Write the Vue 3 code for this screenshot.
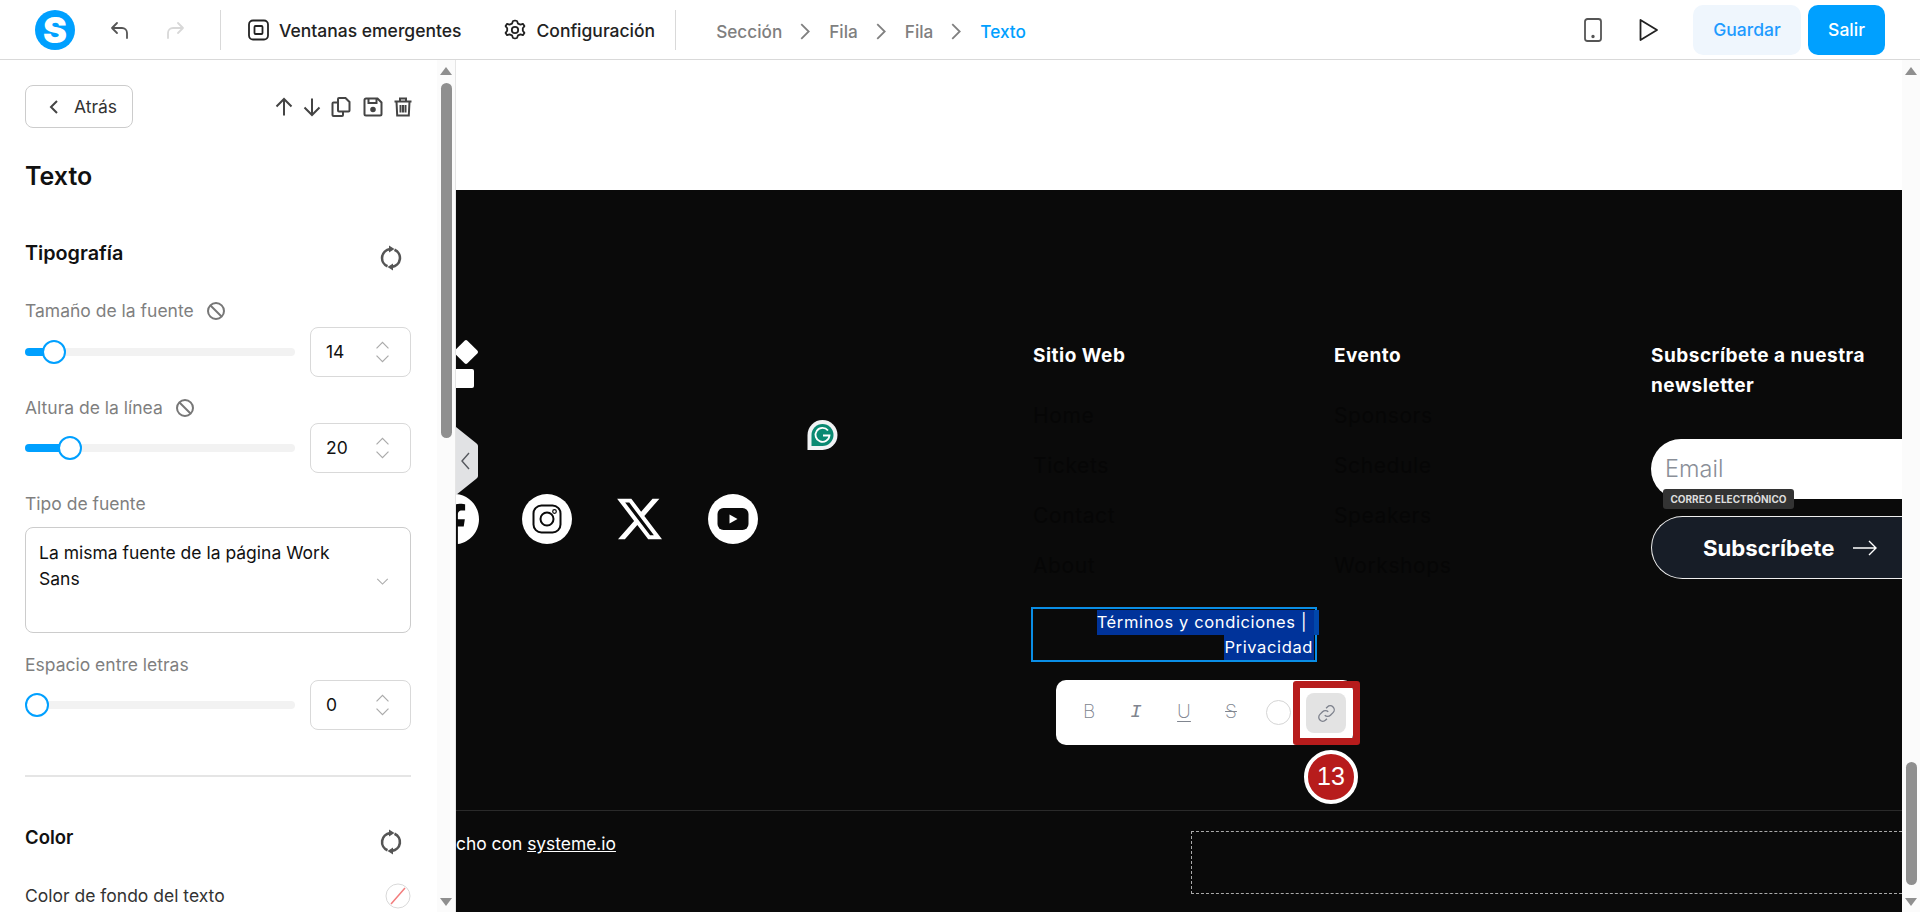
<script setup>
const crumbs = ['Sección', 'Fila', 'Fila']
const siteLinks = ['Home', 'Tickets', 'Contact', 'About']
const eventLinks = ['Sponsors', 'Schedule', 'Speakers', 'Workshops']
</script>

<template>
  <div class="app">
    <header class="top">
      <div class="logo">S</div>
      <svg class="ic undo" viewBox="0 0 24 24"><path d="M9 5 4 10l5 5M4 10h10a5 5 0 0 1 5 5v5" /></svg>
      <svg class="ic redo" viewBox="0 0 24 24"><path d="m15 5 5 5-5 5M20 10H10a5 5 0 0 0-5 5v5" /></svg>
      <i class="sep first"></i>
      <svg class="ic dark popup" viewBox="0 0 24 24"><rect x="3" y="2.500" width="19" height="19" rx="4" /><rect x="8.500" y="8" width="8" height="8" rx="1" /></svg>
      <span class="tool-text">Ventanas emergentes</span>
      <svg class="ic dark gear" viewBox="0 0 24 24"><path d="M12 2.500 14 3l1 2.600 2.500 1 2.400-.8 1.500 2.300-1.600 2.100v2.600l1.600 2.100-1.500 2.300-2.400-.8-2.500 1-1 2.600-2 .5-2-.5-1-2.600-2.500-1-2.400.8-1.500-2.300 1.600-2.100v-2.600L2.600 8.100l1.500-2.300 2.400.8 2.500-1 1-2.600z" /><circle cx="12" cy="12" r="3.200" /></svg>
      <span class="tool-text">Configuración</span>
      <i class="sep second"></i>
      <nav class="crumbs">
        <template v-for="c in crumbs" :key="c">
          <span>{{ c }}</span>
          <svg class="crumb-arrow" viewBox="0 0 12 16"><path d="m2 1 7 7-7 7" /></svg>
        </template>
        <span class="current">Texto</span>
      </nav>
      <div class="top-right">
        <svg class="ic phone" viewBox="0 0 24 24"><rect x="4" y="1" width="16" height="22" rx="2.500" /><circle cx="12" cy="18.500" r=".8" /></svg>
        <svg class="ic dark play" viewBox="0 0 24 24"><path d="M4.500 2 21 12 4.500 22z" /></svg>
        <button class="save">Guardar</button>
        <button class="exit">Salir</button>
      </div>
    </header>

    <div class="body">
      <aside class="side">
        <div class="side-inner">
          <div class="side-head">
            <button class="back">
              <svg viewBox="0 0 12 16"><path d="M9 2 3 8l6 6" /></svg>
              <span>Atrás</span>
            </button>
            <div class="head-icons">
              <svg viewBox="0 0 20 20" class="i20"><path d="M10 18.500V2M2.500 9.500 10 2l7.500 7.500" /></svg>
              <svg viewBox="0 0 20 20" class="i20 down"><path d="M10 1.500V18M2.500 10.500 10 18l7.500-7.500" /></svg>
              <svg viewBox="0 0 20 20" class="i20 copy"><path d="M6.500 5.500H2.500a1 1 0 0 0-1 1V18a1 1 0 0 0 1 1H11a1 1 0 0 0 1-1v-3M8 1h6.500l4 4V13.500a1 1 0 0 1-1 1H8a1 1 0 0 1-1-1V2a1 1 0 0 1 1-1z" /></svg>
              <svg viewBox="0 0 20 20" class="i20 disk"><path d="M3 1.500h11.500l4 4V17a1.500 1.500 0 0 1-1.500 1.500H3A1.500 1.500 0 0 1 1.500 17V3A1.500 1.500 0 0 1 3 1.500zM5.500 1.500v4.500h8V1.500" /><circle cx="10" cy="12.500" r="1.800" fill="#444" /></svg>
              <svg viewBox="0 0 20 20" class="i20 trash"><path d="M1.500 4.500h17M7 4.500V1.500h6v3M3.500 4.500l.7 14h11.600l.7-14M7.500 8v7.500M10 8v7.500M12.500 8v7.500" /></svg>
            </div>
          </div>

          <h1 class="title">Texto</h1>

          <div class="section-row typo">
            <h2>Tipografía</h2>
            <svg class="sync" viewBox="0 0 24 24"><path d="M8.500 20.300A9 9 0 0 1 11 3.100M15.500 3.700A9 9 0 0 1 13 20.900" /><path class="solid" d="m10 -.5 5.500 3.500L10 6.500zM14 24.500 8.500 21l5.500-3.500z" /></svg>
          </div>

          <div class="label lab-size">Tamaño de la fuente
            <svg class="ban" viewBox="0 0 20 20"><circle cx="10" cy="10" r="8" /><path d="m4.500 4.500 11 11" /></svg>
          </div>
          <div class="slider-row r1">
            <div class="track"><div class="fill" style="width: 29px"></div><div class="thumb" style="left: 17px"></div></div>
            <div class="num"><span>14</span><svg viewBox="0 0 16 24"><path d="m1.500 8 6.500-6.500L14.500 8M1.500 16l6.500 6.500 6.500-6.500" /></svg></div>
          </div>

          <div class="label lab-line">Altura de la línea
            <svg class="ban" viewBox="0 0 20 20"><circle cx="10" cy="10" r="8" /><path d="m4.500 4.500 11 11" /></svg>
          </div>
          <div class="slider-row r2">
            <div class="track"><div class="fill" style="width: 45px"></div><div class="thumb" style="left: 33px"></div></div>
            <div class="num"><span>20</span><svg viewBox="0 0 16 24"><path d="m1.500 8 6.500-6.500L14.500 8M1.500 16l6.500 6.500 6.500-6.500" /></svg></div>
          </div>

          <div class="label lab-type">Tipo de fuente</div>
          <div class="select">
            <div class="select-text">La misma fuente de la página Work Sans</div>
            <svg viewBox="0 0 14 8"><path d="m1 1 6 6 6-6" /></svg>
          </div>

          <div class="label lab-space">Espacio entre letras</div>
          <div class="slider-row r3">
            <div class="track"><div class="thumb" style="left: 0"></div></div>
            <div class="num"><span>0</span><svg viewBox="0 0 16 24"><path d="m1.500 8 6.500-6.500L14.500 8M1.500 16l6.500 6.500 6.500-6.500" /></svg></div>
          </div>

          <hr class="rule" />

          <div class="section-row color">
            <h2>Color</h2>
            <svg class="sync" viewBox="0 0 24 24"><path d="M8.500 20.300A9 9 0 0 1 11 3.100M15.500 3.700A9 9 0 0 1 13 20.900" /><path class="solid" d="m10 -.5 5.500 3.500L10 6.500zM14 24.500 8.500 21l5.500-3.500z" /></svg>
          </div>
          <div class="color-row">
            <span>Color de fondo del texto</span>
            <svg class="swatch" viewBox="0 0 26 26"><circle cx="13" cy="13" r="12" fill="#fff" stroke="#d9d9d9" /><path d="M6 21 20 5" stroke="#f27c7c" stroke-width="1.500" /></svg>
          </div>
        </div>
        <div class="bar">
          <i class="arrow up"></i>
          <i class="bar-thumb side-thumb"></i>
          <i class="arrow dn"></i>
        </div>
      </aside>

      <main class="canvas">
        <div class="page">
          <div class="blank"></div>
          <footer class="foot">
            <div class="foot-grid">
              <div class="brand">
                <div class="mark">
                  <i class="diamond"></i>
                  <i class="square"></i>
                </div>
                <div class="socials">
                  <svg class="fb" viewBox="0 0 24 24"><path fill="#fff" d="M24 12.070C24 5.400 18.630 0 12 0S0 5.400 0 12.070c0 6.030 4.390 11.020 10.130 11.930v-8.440H7.080v-3.490h3.050V9.410c0-3.020 1.790-4.690 4.530-4.690 1.310 0 2.680.24 2.680.24v2.970h-1.510c-1.490 0-1.960.93-1.960 1.890v2.250h3.330l-.53 3.490h-2.800V24C19.610 23.090 24 18.100 24 12.070z" /></svg>
                  <svg class="soc" viewBox="0 0 50 50"><circle cx="25" cy="25" r="25" fill="#fff" /><rect x="11.500" y="11.500" width="27" height="27" rx="8" fill="none" stroke="#0a0a0a" stroke-width="2" /><circle cx="25" cy="25" r="6.500" fill="none" stroke="#0a0a0a" stroke-width="2" /><circle cx="32.500" cy="17.500" r="1.800" fill="none" stroke="#0a0a0a" stroke-width="1.200" /></svg>
                  <svg class="xlogo" viewBox="1.200 2.250 21.600 19.500"><path fill="#fff" d="M18.244 2.250h3.308l-7.227 8.260 8.502 11.240H16.170l-5.214-6.817L4.990 21.750H1.680l7.730-8.835L1.254 2.250H8.080l4.713 6.231zm-1.161 17.520h1.833L7.084 4.126H5.117z" /></svg>
                  <svg class="soc yt" viewBox="0 0 50 50"><circle cx="25" cy="25" r="25" fill="#fff" /><rect x="9.500" y="14" width="31" height="22" rx="6" fill="#0a0a0a" /><path d="M21.500 20.500 29.500 25l-8 4.500z" fill="#fff" /></svg>
                </div>
              </div>
              <div class="col">
                <h3>Sitio Web</h3>
                <a v-for="l in siteLinks" :key="l">{{ l }}</a>
              </div>
              <div class="col">
                <h3>Evento</h3>
                <a v-for="l in eventLinks" :key="l">{{ l }}</a>
              </div>
              <div class="news">
                <h3>Subscríbete a nuestra newsletter</h3>
                <div class="email">Email</div>
                <div class="sub-btn">
                  <span>Subscríbete</span>
                  <svg viewBox="0 0 24 16"><path d="M0 8h23M16 1l7 7-7 7" /></svg>
                </div>
              </div>
            </div>
            <div class="selected">
              <span class="sel first-line">Términos y condiciones |</span><span class="overrun"></span><br />
              <span class="sel">Privacidad</span>
            </div>
            <div class="foot-line"></div>
            <div class="foot-bottom">
              <div class="made">Hecho con <u>systeme.io</u></div>
              <div class="dashed"></div>
            </div>
          </footer>
        </div>

        <svg class="collapse" viewBox="0 0 22 68"><path d="M0 0 20 16a4 4 0 0 1 2 4V48a4 4 0 0 1-2 4L0 68z" fill="#e1e2e4" /><path d="m13 26-7 8 7 8" fill="none" stroke="#55585e" stroke-width="1.400" /></svg>
        <svg class="grammarly" viewBox="0 0 30 30"><path d="M0 30V15a15 15 0 1 1 15 15z" fill="#f1f3f5" /><path d="M4 26V15a11 11 0 1 1 11 11z" fill="#0a8a73" /><path d="M20.500 10.500a7 7 0 1 0 1.500 5H15.500" fill="none" stroke="#fff" stroke-width="1.800" /></svg>
        <div class="tip">CORREO ELECTRÓNICO</div>

        <div class="toolbar">
          <span class="fmt b">B</span>
          <span class="fmt it">I</span>
          <span class="fmt un">U</span>
          <span class="fmt st">S</span>
          <i class="circle"></i>
          <span class="link-btn">
            <svg viewBox="0 0 24 24"><path d="M10 14a4.500 4.500 0 0 0 6.500 0l3-3a4.500 4.500 0 0 0-6.500-6.500l-1.500 1.500M14 10a4.500 4.500 0 0 0-6.500 0l-3 3a4.500 4.500 0 0 0 6.500 6.500l1.500-1.500" /></svg>
          </span>
        </div>
        <div class="mark-box"></div>
        <div class="badge">13</div>
      </main>

      <div class="bar page-bar">
        <i class="arrow up"></i>
        <i class="bar-gap"></i>
        <i class="bar-thumb page-thumb"></i>
        <i class="arrow dn"></i>
      </div>
    </div>
  </div>
</template>

<style>
html, body { margin: 0; height: 100%; overflow: hidden; background: #fff; }
</style>

<style scoped>
* { box-sizing: border-box; }
.app { width: 1920px; height: 912px; display: flex; flex-direction: column; font-family: Inter, "Liberation Sans", sans-serif; color: #111; overflow: hidden; }
.top { height: 60px; flex: none; display: flex; align-items: center; padding-left: 35px; padding-right: 35px; border-bottom: 1px solid #d9d9d9; }
.logo { width: 40px; height: 40px; border-radius: 50%; background: #00a0ff; color: #fff; font-weight: 900; font-size: 36px; line-height: 40px; text-align: center; flex: none; }
.ic { width: 24px; height: 24px; flex: none; fill: none; stroke: #555; stroke-width: 1.800; stroke-linecap: round; stroke-linejoin: round; }
.ic.dark { stroke: #222; }
.undo { margin-left: 33px; }
.redo { margin-left: 31px; stroke: #d8d8d8; }
.sep { width: 1px; height: 40px; background: #d9d9d9; flex: none; }
.sep.first { margin-left: 33px; }
.popup { margin-left: 25px; margin-right: 9px; }
.tool-text { font-size: 17.500px; font-weight: 500; color: #222; white-space: nowrap; padding-top: 2px; }
.gear { margin-left: 42px; margin-right: 9px; }
.sep.second { margin-left: 20px; }
.crumbs { margin-left: 40px; display: flex; align-items: center; font-size: 17.200px; font-weight: 500; color: #7f7f7f; gap: 17px; padding-top: 3px; }
.crumb-arrow { width: 13px; height: 17px; fill: none; stroke: #808080; stroke-width: 1.700; flex: none; }
.current { color: #00a0ff; }
.top-right { margin-left: auto; display: flex; align-items: center; }
.phone { margin-right: 31px; }
.play { margin-right: 33px; }
button { font-family: inherit; border: 0; cursor: pointer; }
.save { width: 108px; height: 50px; border-radius: 10px; background: #eff6fd; color: #1e9bff; font-size: 17.500px; font-weight: 500; margin-right: 7px; }
.exit { width: 77px; height: 50px; border-radius: 10px; background: #00a0ff; color: #fff; font-size: 17.500px; font-weight: 500; }

.body { flex: 1; display: flex; min-height: 0; }
.side { width: 456px; flex: none; display: flex; border-right: 1px solid #e5e5e5; overflow: hidden; }
.side-inner { flex: 1; padding: 25px 26px 0 25px; min-width: 0; }
.bar { width: 18px; flex: none; background: #fbfbfb; display: flex; flex-direction: column; align-items: center; padding: 7px 0 6px; }
.arrow { width: 0; height: 0; border-left: 6px solid transparent; border-right: 6px solid transparent; flex: none; }
.arrow.up { border-bottom: 8px solid #8f8f8f; }
.arrow.dn { border-top: 8px solid #8f8f8f; margin-top: auto; }
.bar-thumb { width: 11px; background: #8f8f8f; border-radius: 6px; flex: none; }
.side-thumb { height: 355px; margin-top: 8px; }
.bar-gap { height: 687px; flex: none; }
.page-thumb { height: 123px; }

.side-head { display: flex; align-items: center; height: 43px; }
.back { width: 108px; height: 43px; flex: none; border: 1px solid #ccc; border-radius: 8px; background: #fff; display: flex; align-items: center; padding: 0 0 0 22px; font-size: 17.500px; color: #333; }
.back svg { width: 12px; height: 16px; fill: none; stroke: #444; stroke-width: 2; margin-right: 14px; flex: none; }
.head-icons { margin-left: 141px; display: flex; align-items: center; height: 20px; flex: none; }
.head-icons svg { fill: none; stroke: #444; stroke-width: 2; flex: none; }
.i20 { width: 20px; height: 20px; }
.down { margin-left: 8px; }
.copy { margin-left: 9px; }
.disk { margin-left: 12px; }
.trash { margin-left: 10px; }
.title { margin: 33px 0 0; font-size: 25px; line-height: 30px; font-weight: 600; color: #111; }
.section-row { display: flex; justify-content: space-between; align-items: center; height: 30px; }
.section-row h2 { margin: 0; font-size: 18.500px; font-weight: 600; color: #111; }
.typo { margin-top: 47px; }
.typo h2 { font-size: 19.800px; }
.color { margin-top: 45px; }
.sync { width: 24px; height: 26px; margin: 10px 8px 0 0; fill: none; stroke: #555; stroke-width: 2.600; overflow: visible; }
.sync .solid { fill: #555; stroke: none; }
.label { display: flex; align-items: center; font-size: 17.500px; line-height: 24px; color: #7f7f7f; }
.ban { width: 20px; height: 20px; margin-left: 12px; fill: none; stroke: #777; stroke-width: 2; }
.lab-size { margin-top: 31px; }
.lab-line, .lab-type { margin-top: 19px; }
.lab-space { margin-top: 20px; }
.slider-row { display: flex; align-items: center; height: 50px; }
.r1 { margin-top: 4px; }
.r2, .r3 { margin-top: 3px; }
.track { position: relative; width: 270px; height: 8px; background: #f2f2f2; border-radius: 4px; flex: none; }
.fill { height: 100%; background: #00a0ff; border-radius: 4px; }
.thumb { position: absolute; top: -8px; width: 24px; height: 24px; border-radius: 50%; background: #fff; border: 2px solid #00a0ff; }
.num { margin-left: 15px; width: 101px; height: 50px; border: 1px solid #d9d9d9; border-radius: 8px; display: flex; align-items: center; justify-content: space-between; padding: 0 20px 1px 15px; font-size: 17.500px; color: #111; }
.num svg { width: 15px; height: 22px; fill: none; stroke: #aaa; stroke-width: 1.300; flex: none; }
.select { margin-top: 11px; height: 106px; border: 1px solid #ccc; border-radius: 8px; padding: 12px 21px 0 13px; display: flex; font-size: 17.500px; line-height: 26px; color: #111; position: relative; }
.select-text { width: 310px; }
.select svg { position: absolute; right: 21px; top: 50px; width: 13px; height: 7px; fill: none; stroke: #aaa; stroke-width: 1.200; }
.rule { margin: 45px 0 0; border: 0; height: 2px; background: #e5e5e5; }
.color-row { margin-top: 30px; display: flex; justify-content: space-between; align-items: center; height: 26px; font-size: 17.500px; color: #333; }
.swatch { width: 26px; height: 26px; flex: none; margin-top: 2px; }

.canvas { flex: 1; min-width: 0; position: relative; overflow: hidden; background: #fff; }
.page { width: 1446px; }
.blank { height: 130px; }
.foot { height: 722px; background: #0a0a0a; color: #fff; padding-top: 151px; font-family: Inter, sans-serif; }
.foot-grid { display: grid; grid-template-columns: 577px 301px 317px 251px; height: 266px; }
h3 { margin: 0; font-size: 19px; letter-spacing: .5px; line-height: 30px; font-weight: 700; font-family: Inter, sans-serif; }
.brand { min-width: 0; }
.mark { margin-left: -2px; display: flex; flex-direction: column; }
.diamond { width: 18px; height: 18px; background: #fff; border-radius: 2px; transform: rotate(45deg); margin: 2px 0 0 3px; }
.square { width: 20px; height: 19px; background: #fff; border-radius: 2px; margin-top: 8px; }
.socials { margin-top: 106px; margin-left: -27px; display: flex; align-items: center; gap: 45px; }
.socials svg { flex: none; }
.fb { width: 50px; height: 50px; margin-right: -2px; }
.soc { width: 50px; height: 50px; }
.yt { margin-left: 1px; }
.xlogo { width: 45px; height: 42px; }
.col { display: flex; flex-direction: column; }
.col h3 { margin-bottom: 20px; }
.col a { font-size: 21px; letter-spacing: .6px; line-height: 50px; color: #060606; font-family: Inter, sans-serif; }
.news h3 { width: 250px; white-space: normal; }
.email { margin-top: 38px; width: 260px; height: 60px; background: #fff; border-radius: 30px 0 0 30px; color: #8a8f98; font-size: 23.500px; line-height: 60px; padding-left: 14px; font-family: Inter, sans-serif; font-weight: 300; }
.sub-btn { margin-top: 17px; width: 260px; height: 63px; border: 1px solid #eee; border-radius: 32px 0 0 32px; background: #171d27; display: flex; align-items: center; padding-left: 51px; border-right: 0; }
.sub-btn span { font-size: 22.200px; font-weight: 700; font-family: Inter, sans-serif; }
.sub-btn svg { width: 24px; height: 16px; margin-left: 19px; fill: none; stroke: #fff; stroke-width: 1.400; flex: none; }
.selected { margin: 0 0 0 575px; width: 286px; height: 55px; border: 2px solid #0a8ee6; text-align: right; font-size: 16.500px; line-height: 25px; font-family: Inter, sans-serif; letter-spacing: .62px; white-space: nowrap; padding: 1px 1px 0 0; }
.sel { background: #00339a; display: inline-block; padding-right: 1px; vertical-align: top; }
.first-line { padding-right: 7px; }
.overrun { display: inline-block; width: 5px; height: 25px; margin-right: -5px; background: #0047ab; vertical-align: top; }
.foot-line { margin-top: 148px; height: 1px; background: #2a2a2a; }
.foot-bottom { display: flex; padding-top: 20px; }
.made { flex: 0 0 758px; margin-left: -23px; font-size: 17.400px; line-height: 26px; font-family: Inter, sans-serif; white-space: nowrap; }
.dashed { flex: 1; height: 63px; border: 1px dashed #aaa; border-right: 0; }

.collapse { position: absolute; left: 0; top: 367px; width: 22px; height: 68px; }
.grammarly { position: absolute; left: 351px; top: 360px; width: 31px; height: 30px; }
.tip { position: absolute; left: 1207px; top: 429px; width: 131px; height: 20px; background: #333; border-radius: 3px; color: #ddd; font: 700 10px/20px Inter, sans-serif; text-align: center; white-space: nowrap; }
.toolbar { position: absolute; left: 600px; top: 620px; width: 297px; height: 65px; background: #fff; border-radius: 10px; }
.fmt { position: absolute; top: 20px; width: 30px; text-align: center; font: 200 19px/24px Inter, sans-serif; color: #80858f; }
.b { left: 18px; }
.it { left: 65px; font: italic 400 19px/24px "Liberation Mono", monospace; }
.un { left: 113px; text-decoration: underline; text-underline-offset: 3px; }
.st { left: 160px; text-decoration: line-through; }
.circle { position: absolute; left: 210px; top: 20px; width: 25px; height: 25px; border: 1px solid #d5d5d5; border-radius: 50%; }
.link-btn { position: absolute; left: 250px; top: 13px; width: 40px; height: 40px; background: #e3e3e3; border-radius: 8px; display: flex; align-items: center; justify-content: center; }
.link-btn svg { width: 21px; height: 21px; fill: none; stroke: #7d818c; stroke-width: 1.500; }
.mark-box { position: absolute; left: 837px; top: 621px; width: 67px; height: 64px; border: 7px solid #b71c1c; border-radius: 3px; }
.badge { position: absolute; left: 848px; top: 690px; width: 54px; height: 54px; border-radius: 50%; background: #b71c1c; border: 4px solid #fff; color: #fff; font: 400 25px/45px "Liberation Sans", sans-serif; text-align: center; }
</style>
